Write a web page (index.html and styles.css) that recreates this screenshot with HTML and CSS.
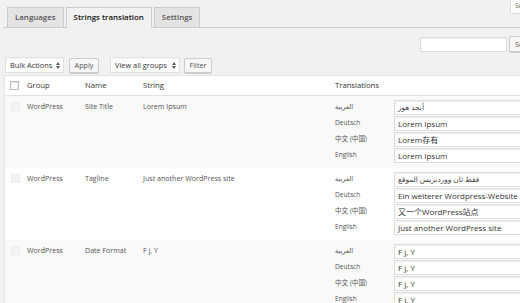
FILE: index.html
```html
<!DOCTYPE html>
<html lang="en">
<head>
<meta charset="utf-8">
<title>Strings translation</title>
<link rel="stylesheet" href="styles.css">
</head>
<body>
<div class="wrap">
  <div class="topbar">
    <nav class="tabs">
      <a class="tab">Languages</a>
      <a class="tab active">Strings translation</a>
      <a class="tab">Settings</a>
    </nav>
    <div class="screen-opts">Screen Options</div>
  </div>

  <div class="search-row">
    <div class="search-input"></div>
    <button class="btn btn-search">Search translations</button>
  </div>

  <div class="actions">
    <div class="select sel-bulk">Bulk Actions <svg class="arr" width="4" height="7" viewBox="0 0 4 7"><path d="M0 3L2 0L4 3Z M0 4L2 7L4 4Z" fill="#555"/></svg></div>
    <button class="btn btn-apply">Apply</button>
    <div class="select sel-groups">View all groups <svg class="arr" width="4" height="7" viewBox="0 0 4 7"><path d="M0 3L2 0L4 3Z M0 4L2 7L4 4Z" fill="#555"/></svg></div>
    <button class="btn btn-filter">Filter</button>
  </div>

  <div class="table">
    <div class="trow thead">
      <div class="cell cb"><span class="check"></span></div>
      <div class="cell th">Group</div>
      <div class="cell th">Name</div>
      <div class="cell th">String</div>
      <div class="cell th">Translations</div>
    </div>

    <div class="trow alt">
      <div class="cell cb"><span class="check dis"></span></div>
      <div class="cell">WordPress</div>
      <div class="cell">Site Title</div>
      <div class="cell">Lorem Ipsum</div>
      <div class="cell tr">
        <div class="lbl">العربية</div><div class="field ar">أبجد هوز</div>
        <div class="lbl">Deutsch</div><div class="field">Lorem Ipsum</div>
        <div class="lbl">中文 (中国)</div><div class="field">Lorem存有</div>
        <div class="lbl">English</div><div class="field">Lorem Ipsum</div>
      </div>
    </div>

    <div class="trow">
      <div class="cell cb"><span class="check dis"></span></div>
      <div class="cell">WordPress</div>
      <div class="cell">Tagline</div>
      <div class="cell">Just another WordPress site</div>
      <div class="cell tr">
        <div class="lbl">العربية</div><div class="field ar">فقط ثان ووردبريس الموقع</div>
        <div class="lbl">Deutsch</div><div class="field">Ein weiterer Wordpress-Website</div>
        <div class="lbl">中文 (中国)</div><div class="field">又一个WordPress站点</div>
        <div class="lbl">English</div><div class="field">Just another WordPress site</div>
      </div>
    </div>

    <div class="trow alt">
      <div class="cell cb"><span class="check dis"></span></div>
      <div class="cell">WordPress</div>
      <div class="cell">Date Format</div>
      <div class="cell">F j, Y</div>
      <div class="cell tr">
        <div class="lbl">العربية</div><div class="field">F j, Y</div>
        <div class="lbl">Deutsch</div><div class="field">F j, Y</div>
        <div class="lbl">中文 (中国)</div><div class="field">F j, Y</div>
        <div class="lbl">English</div><div class="field">F j, Y</div>
      </div>
    </div>
  </div>
</div>
</body>
</html>
```

FILE: styles.css
```css
html, body {
  margin: 0;
  padding: 0;
  overflow: hidden;
}
body {
  background: #f1f1f1;
  font-family: "Open Sans", "Noto Sans", "DejaVu Sans", "Noto Sans CJK SC", sans-serif;
  color: #444;
  width: 520px;
  height: 303px;
}
.wrap {
  padding-left: 4px;
}

/* top bar with tabs */
.topbar {
  display: flex;
  justify-content: space-between;
  align-items: flex-end;
  height: 27px;
  border-bottom: 1px solid #ccc;
  margin-right: -60px;
}
.tabs {
  display: flex;
  align-items: flex-end;
  gap: 2px;
  padding-left: 3px;
}
.tab {
  display: block;
  height: 19px;
  line-height: 19px;
  padding: 0 7px;
  border: 1px solid #ccc;
  border-bottom: none;
  background: #e4e4e4;
  color: #555;
  font-size: 7.9px;
  font-weight: 600;
}
.tab.active {
  background: #f1f1f1;
  color: #111;
  height: 20px;
  margin-bottom: -1px;
}
.screen-opts {
  align-self: flex-start;
  height: 13px;
  line-height: 12px;
  padding: 0 4px;
  background: #fff;
  border: 1px solid #ddd;
  border-top: none;
  font-size: 7px;
  color: #666;
  width: 60px;
}

/* search */
.search-row {
  display: flex;
  justify-content: flex-end;
  align-items: center;
  gap: 2px;
  margin-top: 8px;
  margin-right: -75px;
}
.search-input {
  width: 85px;
  height: 13px;
  background: #fff;
  border: 1px solid #ddd;
  box-shadow: inset 0 1px 2px rgba(0,0,0,.07);
}

/* buttons / selects */
.btn {
  font-family: inherit;
  font-size: 7.2px;
  color: #555;
  background: #f7f7f7;
  border: 1px solid #ccc;
  border-radius: 2px;
  box-shadow: 0 1px 0 #ccc;
  height: 15px;
  line-height: 13px;
  padding: 0 5px;
  margin: 0;
}
.btn-search {
  height: 16px;
  width: 86px;
  text-align: left;
}
.actions {
  display: flex;
  align-items: center;
  margin-top: 5px;
  padding-left: 1px;
  height: 16px;
}
.select {
  display: flex;
  align-items: center;
  justify-content: space-between;
  height: 14px;
  padding: 0 3px 0 4px;
  background: #fff;
  border: 1px solid #e2e2e2;
  box-shadow: inset 0 1px 2px rgba(0,0,0,.05);
  font-size: 7.4px;
  color: #333;
}
.sel-bulk { width: 50px; }
.btn-apply { margin-left: 5px; width: 30px; padding: 0; }
.sel-groups { width: 61px; margin-left: 11px; }
.btn-filter { margin-left: 4px; width: 28px; padding: 0; }
.arr { display: block; }

/* table */
.table {
  margin-top: 2px;
  margin-right: -60px;
  border: 1px solid #e5e5e5;
  background: #fff;
}
.trow {
  display: grid;
  grid-template-columns: 22px 58px 58px 192px 1fr;
  background: #fff;
  padding: 3px 0 5px;
}
.trow.alt { background: #f9f9f9; }
.thead {
  height: 19px;
  padding: 0;
  border-bottom: 1px solid #e1e1e1;
  align-items: center;
}
.cell {
  font-size: 7.1px;
  line-height: 12px;
  padding-top: 1px;
  color: #555;
  white-space: nowrap;
}
.th {
  font-size: 7.7px;
  color: #333;
  line-height: 19px;
  padding-top: 0;
}
.cb { padding-top: 0; }
.check {
  display: block;
  width: 7px;
  height: 7px;
  border: 1px solid #bbb;
  background: #fff;
  margin-left: 5px;
  box-shadow: inset 0 1px 2px rgba(0,0,0,.1);
}
.check.dis {
  margin-left: 6px;
  margin-top: 3px;
  border-color: #ececec;
  background: #f3f3f3;
  box-shadow: none;
}
.tr {
  display: grid;
  grid-template-columns: 59px 160px;
  grid-auto-rows: 15px;
  row-gap: 1px;
  padding-top: 1px;
}
.lbl {
  font-size: 6.6px;
  line-height: 13px;
  color: #555;
}
.field {
  height: 13px;
  line-height: 13px;
  border: 1px solid #ddd;
  background: #fff;
  box-shadow: inset 0 1px 2px rgba(0,0,0,.07);
  padding: 0 3px;
  font-size: 8px;
  color: #333;
  overflow: hidden;
}
.field.ar {
  font-size: 7.4px;
  color: #444;
}
```
